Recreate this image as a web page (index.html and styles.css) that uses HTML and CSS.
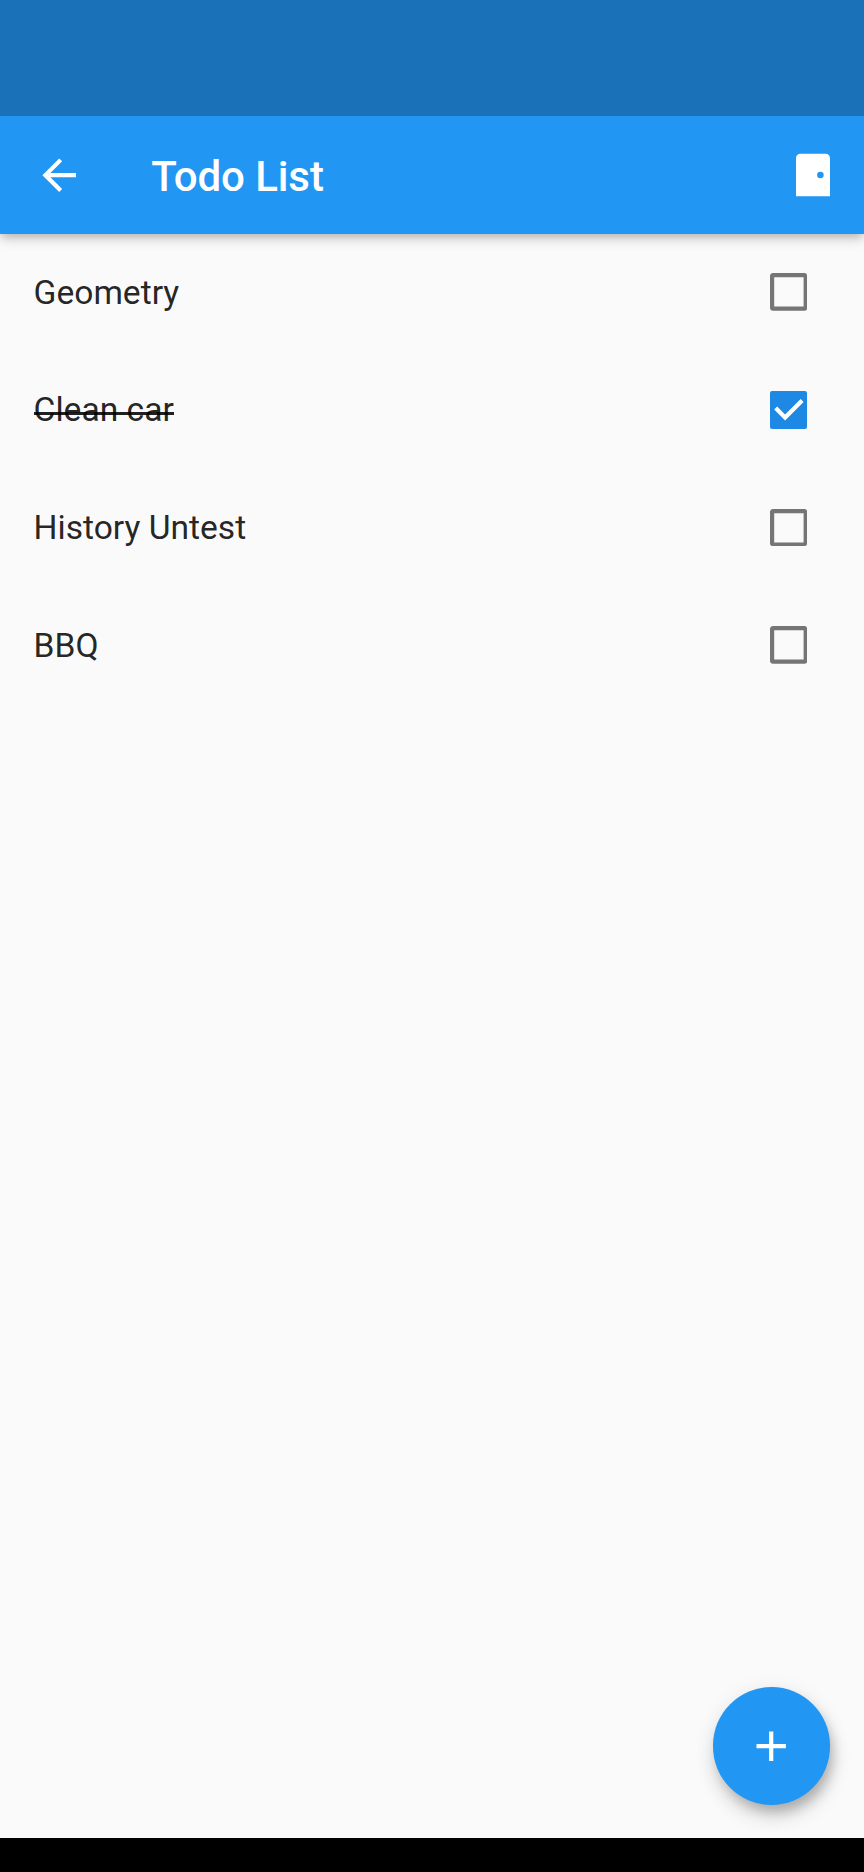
FILE: index.html
```html
<!DOCTYPE html>
<html lang="en">
<head>
<meta charset="utf-8">
<title>Todo List</title>
<link rel="stylesheet" href="styles.css">
</head>
<body>
<div class="screen">
  <div class="status-bar"></div>
  <header class="app-bar">
    <svg class="icon back" viewBox="0 0 24 24"><path d="M20 11H7.83l5.59-5.59L12 4l-8 8 8 8 1.41-1.41L7.83 13H20v-2z"/></svg>
    <h1 class="title">Todo List</h1>
    <svg class="icon door" viewBox="0 0 50.4 50.4"><path fill-rule="evenodd" d="M12.2 3.8h25.6a4.2 4.2 0 0 1 4.2 4.2v38.2H8V8a4.2 4.2 0 0 1 4.2-4.2zM32.4 21.7a3.3 3.3 0 1 0 0 6.6a3.3 3.3 0 0 0 0-6.6z"/></svg>
  </header>
  <main class="list">
    <div class="row"><span class="label">Geometry</span><svg class="box" viewBox="0 0 18 18"><rect x="1" y="1" width="16" height="16" rx=".4"/></svg></div>
    <div class="row"><span class="label done">Clean car</span><svg class="box checked" viewBox="0 0 18 18"><path d="M2.7 8.1 7.2 12.6 15.3 4.5"/></svg></div>
    <div class="row"><span class="label">History Untest</span><svg class="box" viewBox="0 0 18 18"><rect x="1" y="1" width="16" height="16" rx=".4"/></svg></div>
    <div class="row"><span class="label">BBQ</span><svg class="box" viewBox="0 0 18 18"><rect x="1" y="1" width="16" height="16" rx=".4"/></svg></div>
  </main>
  <button class="fab" aria-label="Add"><svg class="icon" viewBox="0 0 24 24"><path d="M19 13h-6v6h-2v-6H5v-2h6V5h2v6h6v2z"/></svg></button>
  <div class="nav-bar"></div>
</div>
</body>
</html>
```
FILE: styles.css
```css
body {
  margin: 0;
  font-family: Roboto, sans-serif;
}

.screen {
  position: relative;
  display: flex;
  flex-direction: column;
  height: 1872px;
  overflow: hidden;
  background: #fafafa;
}

.status-bar {
  position: relative;
  z-index: 1;
  height: 116px;
  background: #1a71b8;
}

.app-bar {
  display: flex;
  align-items: center;
  box-sizing: border-box;
  height: 117.6px;
  padding: 0 25.2px 0 33.6px;
  background: #2196f3;
  box-shadow: 0 4px 8px -2px rgba(0, 0, 0, .18), 0 6px 12px rgba(0, 0, 0, .1), 0 2px 16px rgba(0, 0, 0, .06);
}

.icon {
  display: block;
  width: 50.4px;
  height: 50.4px;
  fill: #fff;
}

.title {
  flex: 1;
  margin: 4px 0 0 67.2px;
  color: #fff;
  font-size: 42px;
  font-weight: 500;
  letter-spacing: -.1px;
  line-height: 50px;
}

.list {
  flex: 1;
}

.row {
  display: flex;
  align-items: center;
  justify-content: space-between;
  height: 117.6px;
  padding: 0 56.7px 0 33.6px;
}

.label {
  position: relative;
  margin-top: 1px;
  color: rgba(0, 0, 0, .87);
  font-size: 33.6px;
  line-height: 40px;
}

/* Strike-through line, drawn over the label */
.done::after {
  content: "";
  position: absolute;
  top: 22px;
  left: 0;
  width: 100%;
  height: 3px;
  background: rgba(0, 0, 0, .87);
}

.box {
  display: block;
  width: 37.8px;
  height: 37.8px;
  border-radius: 2.1px;
  fill: none;
  stroke: #757575;
  stroke-width: 2;
}

.checked {
  background: #1e88e5;
  stroke: #fff;
}

.fab {
  position: absolute;
  right: 33.6px;
  bottom: 67.4px;
  display: flex;
  align-items: center;
  justify-content: center;
  width: 117.6px;
  height: 117.6px;
  padding: 0;
  border: 0;
  border-radius: 50%;
  background: #2196f3;
  box-shadow: 4px 8px 12px -2px rgba(0, 0, 0, .2), 2px 12px 20px rgba(0, 0, 0, .14), 0 2px 24px rgba(0, 0, 0, .05);
}

.nav-bar {
  height: 34px;
  background: #000;
}
```
